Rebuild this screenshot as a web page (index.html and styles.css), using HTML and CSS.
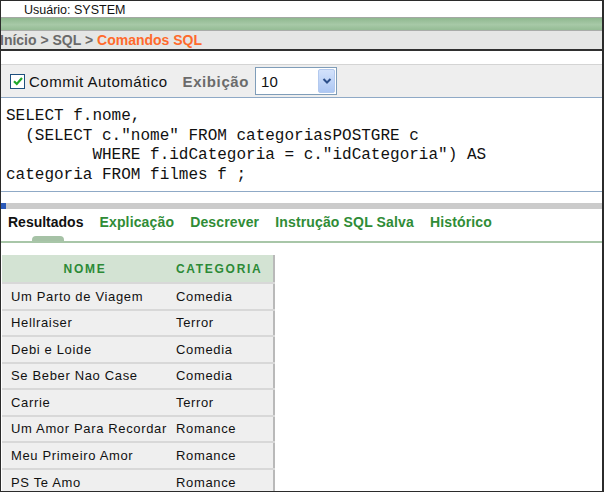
FILE: index.html
```html
<!DOCTYPE html>
<html lang="pt">
<head>
<meta charset="utf-8">
<title>Comandos SQL</title>
<link rel="stylesheet" href="styles.css">
</head>
<body>
<div class="frame">
  <div class="userbar">Usuário: SYSTEM</div>
  <div class="greenbar"></div>
  <div class="crumbs"><span class="crumb">Início</span> &gt; <span class="crumb">SQL</span> &gt; <span class="current">Comandos SQL</span></div>
  <div class="gap"></div>
  <div class="toolbar">
    <span class="checkbox"><svg width="12" height="12" viewBox="0 0 12 12"><path d="M2 6.2 L4.8 9 L10 3" fill="none" stroke="#1fa82a" stroke-width="2.2"/></svg></span>
    <span class="label">Commit Automático</span>
    <span class="exib">Exibição</span>
    <span class="select"><span class="selval">10</span><span class="selbtn"><svg width="10" height="8" viewBox="0 0 10 8"><path d="M1.5 2 L5 5.5 L8.5 2" fill="none" stroke="#2c4f8a" stroke-width="2"/></svg></span></span>
  </div>
  <pre class="sql">SELECT f.nome,
  (SELECT c."nome" FROM categoriasPOSTGRE c
         WHERE f.idCategoria = c."idCategoria") AS
categoria FROM filmes f ;</pre>
  <div class="gap2"></div>
  <div class="progress"><span class="progmark"></span></div>
  <div class="tabs">
    <span class="tab active">Resultados</span>
    <span class="tab">Explicação</span>
    <span class="tab">Descrever</span>
    <span class="tab">Instrução SQL Salva</span>
    <span class="tab">Histórico</span>
  </div>
  <div class="tabline"><span class="tabind"></span></div>
  <div class="results">
    <table class="grid">
      <thead>
        <tr><th class="c1">NOME</th><th class="c2">CATEGORIA</th></tr>
      </thead>
      <tbody>
        <tr><td>Um Parto de Viagem</td><td>Comedia</td></tr>
        <tr><td>Hellraiser</td><td>Terror</td></tr>
        <tr><td>Debi e Loide</td><td>Comedia</td></tr>
        <tr><td>Se Beber Nao Case</td><td>Comedia</td></tr>
        <tr><td>Carrie</td><td>Terror</td></tr>
        <tr><td>Um Amor Para Recordar</td><td>Romance</td></tr>
        <tr><td>Meu Primeiro Amor</td><td>Romance</td></tr>
        <tr><td>PS Te Amo</td><td>Romance</td></tr>
      </tbody>
    </table>
  </div>
</div>
</body>
</html>
```

FILE: styles.css
```css
* { box-sizing: border-box; }
html, body { margin: 0; padding: 0; background: #fff; }
body { font-family: "Liberation Sans", Arial, sans-serif; }

.frame {
  width: 604px;
  height: 492px;
  border: 1px solid #2b2b2b;
  border-right-width: 2px;
  overflow: hidden;
  display: flex;
  flex-direction: column;
}

.userbar {
  height: 16px;
  flex: none;
  padding-left: 23px;
  font-size: 12.5px;
  line-height: 18px;
  color: #111;
}

.greenbar {
  height: 14px;
  flex: none;
  border-top: 1px solid #a3a8a3;
  border-bottom: 1px solid #a9aca9;
  background: linear-gradient(#8fb88f, #a7c9a7 55%, #95bc95);
}

.crumbs {
  height: 20px;
  flex: none;
  background: #e5e6e5;
  border-bottom: 2px solid #2f2f2f;
  font-size: 14px;
  font-weight: bold;
  color: #6a6a6a;
  line-height: 18px;
  margin-left: -1px;
  white-space: nowrap;
}
.crumbs .current { color: #ff6a2c; }

.gap { height: 13px; flex: none; }

.toolbar {
  height: 34px;
  flex: none;
  background: #eeeeee;
  border-top: 1px solid #d4d4d4;
  border-bottom: 1px solid #8fa9c6;
  display: flex;
  align-items: center;
  padding-left: 9px;
}
.checkbox {
  width: 15px;
  height: 15px;
  border: 1px solid #1d4f7e;
  background: #fff;
  display: flex;
  align-items: center;
  justify-content: center;
  margin-right: 4px;
}
.label {
  font-size: 15px;
  letter-spacing: 0.5px;
  color: #111;
}
.exib {
  font-size: 15px;
  font-weight: bold;
  color: #6b6b6b;
  letter-spacing: 0.6px;
  margin-left: 15px;
}
.select {
  margin-left: 6px;
  width: 82px;
  height: 28px;
  border: 1px solid #7f9db9;
  background: #fff;
  display: flex;
  align-items: center;
  justify-content: space-between;
  padding: 1px;
}
.selval {
  font-size: 15px;
  padding-left: 4px;
  color: #111;
}
.selbtn {
  width: 17px;
  height: 24px;
  background: linear-gradient(#d3e2fb, #adc7f3);
  border: 1px solid #b3c9ee;
  border-radius: 2px;
  display: flex;
  align-items: center;
  justify-content: center;
}

.sql {
  margin: 0;
  height: 94px;
  flex: none;
  border-bottom: 1px solid #8fa9c6;
  padding: 9px 0 0 5px;
  font-family: "Liberation Mono", "Courier New", monospace;
  font-size: 16px;
  line-height: 19.5px;
  color: #111;
}

.gap2 { height: 11px; flex: none; }

.progress {
  height: 6px;
  flex: none;
  background: #cbcbcb;
  display: flex;
}
.progmark {
  width: 5px;
  height: 6px;
  background: #2a59b8;
}

.tabs {
  height: 26px;
  flex: none;
  display: flex;
  align-items: center;
  gap: 16px;
  padding-left: 7px;
  white-space: nowrap;
}
.tab {
  font-size: 14px;
  font-weight: bold;
  color: #2f8c36;
  letter-spacing: 0.15px;
}
.tab.active { color: #111; letter-spacing: 0; }

.tabline {
  height: 8px;
  flex: none;
  border-bottom: 2px solid #a8c6a8;
  display: flex;
  align-items: flex-end;
  padding-left: 31px;
}
.tabind {
  width: 32px;
  height: 5px;
  background: #a6c2a6;
  border-radius: 4px 4px 0 0;
}

.results {
  padding: 12px 0 0 1px;
  flex: none;
}
.grid {
  border-collapse: collapse;
  width: 273px;
  border-right: 2px solid #b9b9b9;
  font-size: 13px;
  letter-spacing: 0.65px;
  color: #111;
}
.grid th {
  height: 28px;
  background: #d3e3d3;
  color: #2c8a37;
  font-size: 12px;
  font-weight: bold;
  letter-spacing: 1.7px;
  border-bottom: 1px solid #c4d0c4;
}
.grid th.c1 { text-align: center; width: 166px; }
.grid th.c2 { text-align: left; padding-left: 8px; }
.grid td {
  height: 26.5px;
  background: #efefef;
  border-top: 2px solid #d8d8d8;
  padding: 0 0 0 8px;
  white-space: nowrap;
}
.grid td:first-child { padding-left: 9px; }
```
